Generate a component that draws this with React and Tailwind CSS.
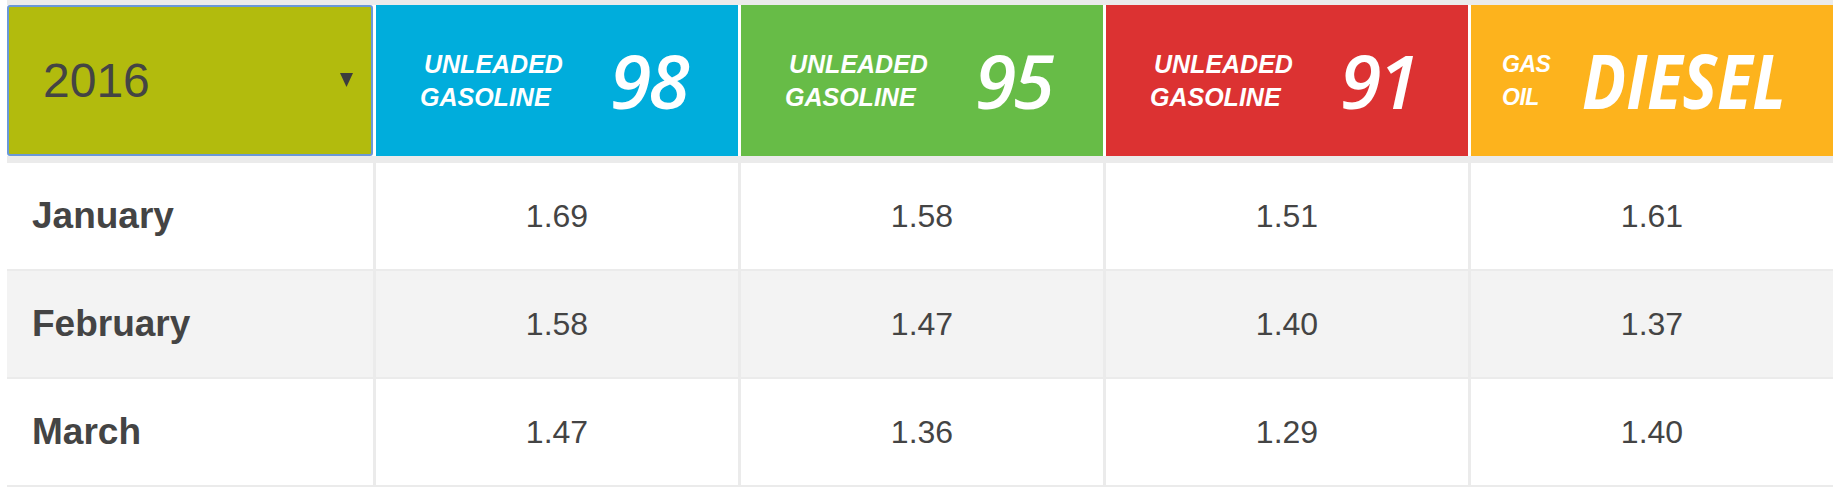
import React from 'react';

const fuels = [
  { id: 'u98', bg: 'bg-[#00addc]', top: 'UNLEADED', bottom: 'GASOLINE', grade: '98' },
  { id: 'u95', bg: 'bg-[#67bc47]', top: 'UNLEADED', bottom: 'GASOLINE', grade: '95' },
  { id: 'u91', bg: 'bg-[#dc3232]', top: 'UNLEADED', bottom: 'GASOLINE', grade: '91' },
];

const rows = [
  { month: 'January', prices: ['1.69', '1.58', '1.51', '1.61'] },
  { month: 'February', prices: ['1.58', '1.47', '1.40', '1.37'] },
  { month: 'March', prices: ['1.47', '1.36', '1.29', '1.40'] },
];

const cols = 'grid grid-cols-[366px_362px_362px_362px_362px] gap-x-[3px]';

function FuelHeader({ fuel }) {
  return (
    <div className={`${fuel.bg} flex items-center pl-[44px] text-white italic font-bold`}>
      <div className="w-[190px] text-[25px] leading-[33px] font-['Liberation_Sans',Arial,sans-serif]">
        <div className="pl-[4px]">{fuel.top}</div>
        <div>{fuel.bottom}</div>
      </div>
      <div className="text-[75px] leading-none font-semibold font-['Open_Sans',sans-serif] tracking-[-3px]">
        {fuel.grade}
      </div>
    </div>
  );
}

export default function App() {
  return (
    <div className="min-h-screen bg-white font-['Liberation_Sans',Arial,sans-serif]">
      <div className="ml-[7px] w-[1826px] bg-[#ebebeb] pt-[5px] pb-[2px]">
        <div className={`${cols} h-[151px] bg-white`}>
          <div className="relative flex items-center rounded-[3px] border-2 border-[#6a98d8] bg-[#b2bb0d] pl-[34px]">
            <span className="text-[48px] text-[#444444]">2016</span>
            <svg viewBox="0 0 13 14" className="absolute right-[18px] top-[66px] h-[14px] w-[13px]">
              <polygon points="0,0 13,0 6.5,14" fill="#3d3d3d" />
            </svg>
          </div>
          {fuels.map(f => (
            <FuelHeader key={f.id} fuel={f} />
          ))}
          <div className="bg-[#fdb31d] flex items-center pl-[31px] text-white italic font-bold">
            <div className="w-[80px] text-[23px] leading-[33px] tracking-[-0.5px]">
              <div>GAS</div>
              <div>OIL</div>
            </div>
            <div className="origin-left scale-x-[0.87] text-[75px] leading-none font-bold font-['Open_Sans',sans-serif]">
              DIESEL
            </div>
          </div>
        </div>

        <div className="mt-[7px] flex flex-col gap-y-[2px]">
          {rows.map((r, i) => (
            <div key={r.month} className={`${cols} h-[106px]`}>
              <div className={`${i % 2 ? 'bg-[#f3f3f3]' : 'bg-white'} flex items-center pl-[25px] text-[37px] font-bold text-[#444444]`}>
                {r.month}
              </div>
              {r.prices.map((p, j) => (
                <div
                  key={j}
                  className={`${i % 2 ? 'bg-[#f3f3f3]' : 'bg-white'} flex items-center justify-center text-[32px] text-[#444444]`}
                >
                  {p}
                </div>
              ))}
            </div>
          ))}
        </div>
      </div>
    </div>
  );
}
